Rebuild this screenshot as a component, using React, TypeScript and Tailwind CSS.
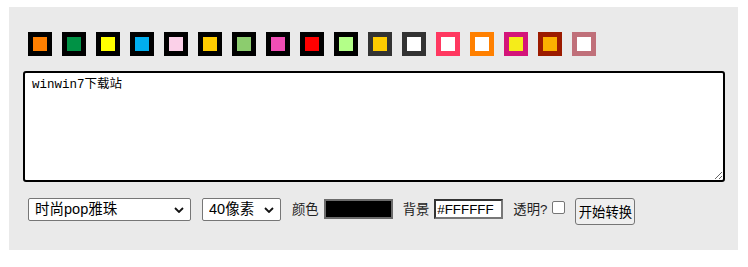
import { useState } from "react";

const swatches = [
  { border: "border-black", fill: "bg-[#ff7f00]" },
  { border: "border-black", fill: "bg-[#009245]" },
  { border: "border-black", fill: "bg-[#ffff00]" },
  { border: "border-black", fill: "bg-[#00aeef]" },
  { border: "border-black", fill: "bg-[#fbd0e8]" },
  { border: "border-black", fill: "bg-[#ffcc00]" },
  { border: "border-black", fill: "bg-[#8ccc6e]" },
  { border: "border-black", fill: "bg-[#f04eb5]" },
  { border: "border-black", fill: "bg-[#ff0000]" },
  { border: "border-black", fill: "bg-[#b3ff88]" },
  { border: "border-[#333333]", fill: "bg-[#ffcc00]" },
  { border: "border-[#333333]", fill: "bg-white" },
  { border: "border-[#ff3860]", fill: "bg-white" },
  { border: "border-[#ff8000]", fill: "bg-white" },
  { border: "border-[#d4157a]", fill: "bg-[#f5ec1a]" },
  { border: "border-[#9c1b00]", fill: "bg-[#fbb000]" },
  { border: "border-[#c0707a]", fill: "bg-white" },
];

const font = "font-['Liberation_Sans','Noto_Sans_CJK_SC',sans-serif]";

function Chevron() {
  return (
    <svg width="10" height="6" viewBox="0 0 10 6" className="pointer-events-none absolute right-[7px] top-[9px]">
      <path d="M1 1l4 4 4-4" fill="none" stroke="#111" strokeWidth="1.8" />
    </svg>
  );
}

function Select({ width, options }: { width: string; options: string[] }) {
  return (
    <div className={`relative ${width} h-[23px]`}>
      <select
        className={`${font} h-full w-full appearance-none rounded-[2px] border border-[#767676] bg-white pl-[6px] text-[14.5px] leading-[21px] text-black outline-none`}
      >
        {options.map((o) => (
          <option key={o}>{o}</option>
        ))}
      </select>
      <Chevron />
    </div>
  );
}

export default function App() {
  const [text, setText] = useState("winwin7下载站");
  const [bg, setBg] = useState("#FFFFFF");

  return (
    <div className="min-h-[267px] bg-white pt-[7px] pl-[9px]">
      <div className="h-[243px] w-[729px] bg-[#eaeaea] pl-[14px] pt-[25px]">
        <div className="ml-[5px] flex gap-[10px]">
          {swatches.map((s, i) => (
            <div key={i} className={`h-[24px] w-[24px] border-[5px] ${s.border} ${s.fill}`} />
          ))}
        </div>

        <textarea
          value={text}
          onChange={(e) => setText(e.target.value)}
          className="mt-[15px] block h-[111px] w-[702px] rounded-[3px] border-2 border-black bg-white px-[7px] py-[4px] font-['Liberation_Mono','Noto_Sans_CJK_SC',monospace] text-[12.5px] leading-[16px] text-black outline-none"
        />

        <div className={`${font} ml-[5px] mt-[16px] flex items-start text-[13.33px] text-[#222]`}>
          <Select width="w-[163px]" options={["时尚pop雅珠"]} />
          <div className="ml-[11px]">
            <Select width="w-[79px]" options={["40像素"]} />
          </div>
          <span className="ml-[11px] leading-[23px]">颜色</span>
          <div className="ml-[5px] mt-[1px] h-[20px] w-[69px] border-2 border-[#6b6b6b] bg-black" />
          <span className="ml-[10px] leading-[23px]">背景</span>
          <input
            value={bg}
            onChange={(e) => setBg(e.target.value)}
            className="ml-[5px] mt-[1px] h-[20px] w-[69px] border-2 border-t-[#333] border-l-[#333] border-r-[#777] border-b-[#777] bg-white px-[1px] text-[13.33px] leading-[16px] text-black outline-none"
          />
          <span className="ml-[10px] leading-[23px]">透明?</span>
          <input
            type="checkbox"
            className="ml-[5px] mt-[3px] h-[13px] w-[13px] appearance-none rounded-[2px] border border-[#767676] bg-white"
          />
          <button className="ml-[10px] h-[27px] w-[60px] rounded-[3px] border border-[#767676] bg-[#efefef] pt-[3px] text-[13.33px] text-black">
            开始转换
          </button>
        </div>
      </div>
    </div>
  );
}
